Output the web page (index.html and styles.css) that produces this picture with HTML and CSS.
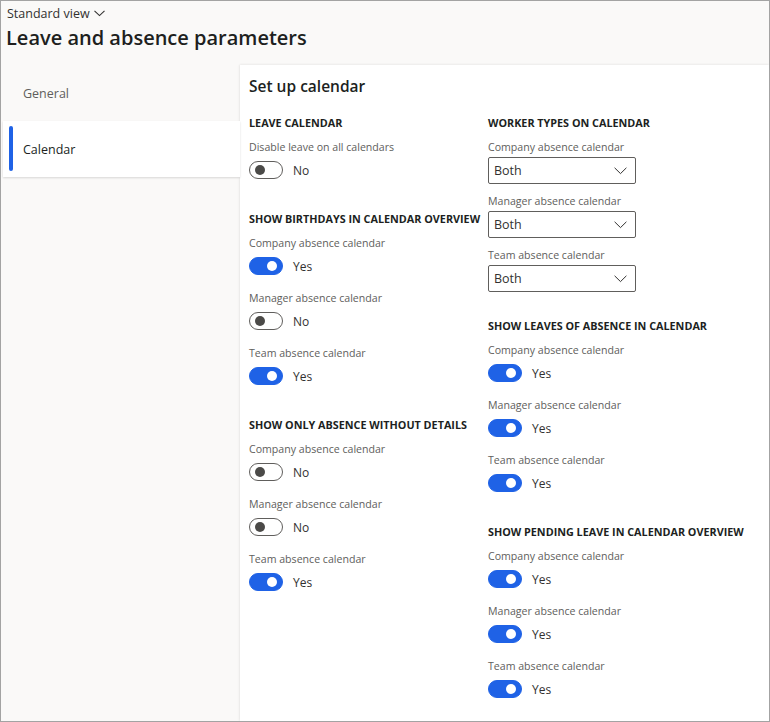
FILE: index.html
```html
<!DOCTYPE html>
<html>
<head>
    <title>Leave and absence parameters</title>
    <link rel="stylesheet" href="styles.css">
</head>
<body>
    <div class="frame">
        <div class="header">
            <div class="view">Standard view
                <svg class="view-chevron" width="11" height="7" viewBox="0 0 11 7"><path d="M0.5 0.8 L5.5 5.6 L10.5 0.8" fill="none" stroke="#323130" stroke-width="1.1"/></svg>
            </div>
            <h1 class="title">Leave and absence parameters</h1>
        </div>

        <div class="main">
            <nav class="nav">
                <div class="nav-item">General</div>
                <div class="nav-item active">Calendar</div>
            </nav>

            <section class="panel">
                <h2 class="panel-title">Set up calendar</h2>

                <div class="columns">
                    <div class="col">
                        <div class="group">
                            <div class="group-head">LEAVE CALENDAR</div>
                            <div class="field">
                                <div class="label">Disable leave on all calendars</div>
                                <div class="toggle-row"><span class="toggle"></span>No</div>
                            </div>
                        </div>

                        <div class="group">
                            <div class="group-head">SHOW BIRTHDAYS IN CALENDAR OVERVIEW</div>
                            <div class="field">
                                <div class="label">Company absence calendar</div>
                                <div class="toggle-row"><span class="toggle on"></span>Yes</div>
                            </div>
                            <div class="field">
                                <div class="label">Manager absence calendar</div>
                                <div class="toggle-row"><span class="toggle"></span>No</div>
                            </div>
                            <div class="field">
                                <div class="label">Team absence calendar</div>
                                <div class="toggle-row"><span class="toggle on"></span>Yes</div>
                            </div>
                        </div>

                        <div class="group">
                            <div class="group-head">SHOW ONLY ABSENCE WITHOUT DETAILS</div>
                            <div class="field">
                                <div class="label">Company absence calendar</div>
                                <div class="toggle-row"><span class="toggle"></span>No</div>
                            </div>
                            <div class="field">
                                <div class="label">Manager absence calendar</div>
                                <div class="toggle-row"><span class="toggle"></span>No</div>
                            </div>
                            <div class="field">
                                <div class="label">Team absence calendar</div>
                                <div class="toggle-row"><span class="toggle on"></span>Yes</div>
                            </div>
                        </div>
                    </div>

                    <div class="col">
                        <div class="group">
                            <div class="group-head">WORKER TYPES ON CALENDAR</div>
                            <div class="field select-field">
                                <div class="label">Company absence calendar</div>
                                <div class="select">Both<svg width="13" height="8" viewBox="0 0 13 8"><path d="M0.6 0.8 L6.5 6.6 L12.4 0.8" fill="none" stroke="#323130" stroke-width="1"/></svg></div>
                            </div>
                            <div class="field select-field">
                                <div class="label">Manager absence calendar</div>
                                <div class="select">Both<svg width="13" height="8" viewBox="0 0 13 8"><path d="M0.6 0.8 L6.5 6.6 L12.4 0.8" fill="none" stroke="#323130" stroke-width="1"/></svg></div>
                            </div>
                            <div class="field select-field">
                                <div class="label">Team absence calendar</div>
                                <div class="select">Both<svg width="13" height="8" viewBox="0 0 13 8"><path d="M0.6 0.8 L6.5 6.6 L12.4 0.8" fill="none" stroke="#323130" stroke-width="1"/></svg></div>
                            </div>
                        </div>

                        <div class="group">
                            <div class="group-head">SHOW LEAVES OF ABSENCE IN CALENDAR</div>
                            <div class="field">
                                <div class="label">Company absence calendar</div>
                                <div class="toggle-row"><span class="toggle on"></span>Yes</div>
                            </div>
                            <div class="field">
                                <div class="label">Manager absence calendar</div>
                                <div class="toggle-row"><span class="toggle on"></span>Yes</div>
                            </div>
                            <div class="field">
                                <div class="label">Team absence calendar</div>
                                <div class="toggle-row"><span class="toggle on"></span>Yes</div>
                            </div>
                        </div>

                        <div class="group">
                            <div class="group-head">SHOW PENDING LEAVE IN CALENDAR OVERVIEW</div>
                            <div class="field">
                                <div class="label">Company absence calendar</div>
                                <div class="toggle-row"><span class="toggle on"></span>Yes</div>
                            </div>
                            <div class="field">
                                <div class="label">Manager absence calendar</div>
                                <div class="toggle-row"><span class="toggle on"></span>Yes</div>
                            </div>
                            <div class="field">
                                <div class="label">Team absence calendar</div>
                                <div class="toggle-row"><span class="toggle on"></span>Yes</div>
                            </div>
                        </div>
                    </div>
                </div>
            </section>
        </div>
    </div>
</body>
</html>
```

FILE: styles.css
```css
body {
    margin: 0;
    font-family: 'Open Sans', 'Noto Sans', sans-serif;
    color: #323130;
}

.frame {
    width: 770px;
    height: 722px;
    box-sizing: border-box;
    border: 1px solid #a3a3a3;
    background: #faf9f8;
    display: flex;
    flex-direction: column;
    overflow: hidden;
}

.header {
    flex-shrink: 0;
    height: 64px;
    padding: 3px 0 0 5px;
    box-sizing: border-box;
}

.view {
    font-size: 12.5px;
    line-height: 20px;
    padding-left: 1px;
    display: flex;
    align-items: center;
    gap: 4px;
}

.view-chevron {
    margin-top: -2px;
}

.title {
    margin: 0;
    font-size: 20px;
    font-weight: 600;
    line-height: 28px;
    color: #201f1e;
}

.main {
    flex: 1;
    min-height: 0;
    display: flex;
}

.nav {
    width: 239px;
    padding-left: 2px;
    box-sizing: border-box;
}

.nav-item {
    height: 56px;
    display: flex;
    align-items: center;
    padding-left: 20px;
    font-size: 12.5px;
    color: #605e5c;
}

.nav-item.active {
    position: relative;
    background: #fff;
    color: #201f1e;
    box-shadow: 0 1px 2px rgba(0, 0, 0, 0.14);
}

.nav-item.active::before {
    content: "";
    position: absolute;
    left: 6px;
    top: 5px;
    bottom: 6px;
    width: 4px;
    border-radius: 2px;
    background: #1f62e6;
}

.panel {
    flex: 1;
    background: #fff;
    padding: 9px 0 0 9px;
    box-shadow: -1px 0 2px rgba(0, 0, 0, 0.06), 0 -1px 2px rgba(0, 0, 0, 0.04);
}

.panel-title {
    margin: 0 0 17px;
    font-size: 15.5px;
    font-weight: 600;
    line-height: 24px;
    color: #201f1e;
}

.columns {
    display: grid;
    grid-template-columns: 239px 1fr;
}

.col {
    display: flex;
    flex-direction: column;
}

.group {
    display: flex;
    flex-direction: column;
    margin-bottom: 17px;
}

.group-head {
    font-size: 10.8px;
    font-weight: 700;
    line-height: 16px;
    color: #201f1e;
    margin-bottom: 8px;
}

.field {
    margin-bottom: 15px;
}

.label {
    font-size: 10.6px;
    line-height: 16px;
    color: #605e5c;
    margin-bottom: 6px;
}

.toggle-row {
    display: flex;
    align-items: center;
    gap: 10px;
    height: 18px;
    font-size: 12px;
}

.toggle {
    width: 34px;
    height: 18px;
    box-sizing: border-box;
    border: 1px solid #605e5c;
    border-radius: 10px;
    position: relative;
    background: #fff;
}

.toggle::after {
    content: "";
    position: absolute;
    left: 5px;
    top: 3px;
    width: 10px;
    height: 10px;
    border-radius: 50%;
    background: #4b4a48;
}

.toggle.on {
    background: #1f62e6;
    border-color: #1f62e6;
}

.toggle.on::after {
    left: auto;
    right: 5px;
    background: #fff;
}

.select-field {
    margin-bottom: 9px;
}

.select-field .label {
    margin-bottom: 2px;
}

.select {
    width: 148px;
    height: 27px;
    box-sizing: border-box;
    border: 1px solid #605e5c;
    border-radius: 2px;
    display: flex;
    align-items: center;
    justify-content: space-between;
    padding: 0 8px 0 5px;
    font-size: 12.5px;
}
```
